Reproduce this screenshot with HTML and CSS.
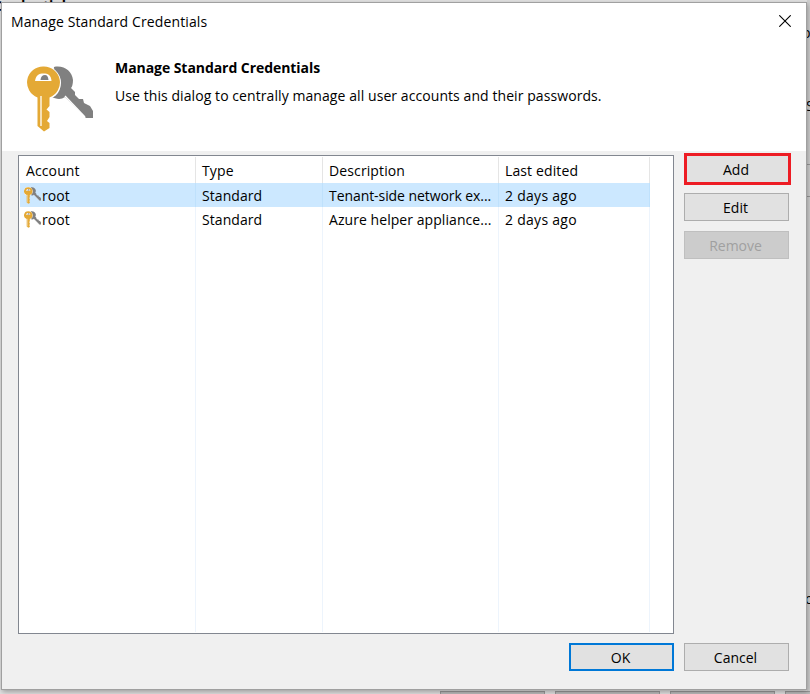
FILE: index.html
```html
<!DOCTYPE html>
<html lang="en">
<head>
<meta charset="utf-8">
<title>Manage Standard Credentials</title>
<link rel="stylesheet" href="styles.css">
</head>
<body>
<svg class="defs" width="0" height="0" aria-hidden="true">
  <symbol id="keys" viewBox="0 0 66 66">
    <path fill="#808080" d="M27 1C37-1 45 5 46 14C46 18 45 21 44 22L48 26V29L52 33H56L57 37L63 40L66 45V52H59L38 31C34 34 29 33 24 31Z"/>
    <path stroke="#fff" stroke-width="1.4" fill="none" d="M38 30L58 51"/>
    <circle cx="16.500" cy="17" r="17.500" fill="#fff"/>
    <path fill="#e4a935" d="M16.500 .5A16 16 0 0 1 22.500 31.500V40L19.500 43.500L22.500 46V51L20 55L22.500 57V62L17 65.500L10.500 60V31.500A16 16 0 0 1 16.500 .5Z"/>
    <path fill="#fff" d="M8 15C9 9 12 7.500 16.500 7.500S24 9 24.500 15Z"/>
    <path fill="#808080" d="M13.500 14Q14 9 18 9Q21 9 21.500 14Z"/>
    <path stroke="#fff" stroke-width="1.300" d="M14 30V60"/>
  </symbol>
</svg>
<div class="backdrop" aria-hidden="true">
  <span class="bg-title">Credentials</span>
  <div class="bg-right"><span class="frag frag-p">p</span><span class="frag frag-s">S</span><span class="frag frag-o">o</span><i class="bg-field"></i></div>
  <div class="bg-buttons"><i></i><i></i><i></i><i></i></div>
</div>
<main class="dialog">
  <header class="top">
    <div class="titlebar">
      <span class="w-title">Manage Standard Credentials</span>
      <svg class="close" width="12" height="12" viewBox="0 0 12 12"><path d="M.3.300L11.700 11.700M11.700.300L.300 11.700"/></svg>
    </div>
    <div class="intro">
      <svg class="keys-large"><use href="#keys"/></svg>
      <div>
        <h1>Manage Standard Credentials</h1>
        <p>Use this dialog to centrally manage all user accounts and their passwords.</p>
      </div>
    </div>
  </header>
  <section class="content">
    <div class="list">
      <div class="row head"><span>Account</span><span>Type</span><span>Description</span><span>Last edited</span></div>
      <div class="row selected"><span><svg class="keys-small"><use href="#keys"/></svg>root</span><span>Standard</span><span class="tight">Tenant-side network ex...</span><span class="wide">2 days ago</span></div>
      <div class="row"><span><svg class="keys-small"><use href="#keys"/></svg>root</span><span>Standard</span><span>Azure helper appliance...</span><span class="wide">2 days ago</span></div>
      <div class="row filler"><span></span><span></span><span></span><span></span></div>
    </div>
    <div class="actions">
      <button class="add">Add</button>
      <button>Edit</button>
      <button disabled>Remove</button>
    </div>
  </section>
  <footer>
    <button class="ok">OK</button>
    <button>Cancel</button>
  </footer>
</main>
</body>
</html>
```
FILE: styles.css
```css
* { box-sizing: border-box; }
body {
  margin: 0; width: 810px; height: 694px; overflow: hidden; position: relative;
  background: #e1e1e1; color: #000;
  font: 14px/20px "Open Sans", "Noto Sans", sans-serif;
}
.defs { position: absolute; }
.dialog {
  position: relative; display: flex; flex-direction: column;
  width: 806px; height: 688px; margin: 2px 0 0 1px;
  border: 1px solid #a0a0a0; background: #f0f0f0;
  box-shadow: 1px 2px 5px rgba(0,0,0,.3);
}
.top { height: 148px; background: #fff; }
.titlebar { display: flex; justify-content: space-between; padding: 9px 15px 0 9px; height: 52px; }
.w-title { letter-spacing: .12px; }
.close { margin-top: 3px; stroke: #000; stroke-width: 1.1; }
.intro { display: flex; padding-left: 25px; }
.keys-large { width: 66px; height: 66px; margin: 11px 22px 0 0; }
h1 { margin: 3px 0 8px; font-size: 14px; line-height: 20px; letter-spacing: -.06px; }
p { margin: 0; letter-spacing: .075px; }
.content { display: flex; padding: 4px 0 0 16px; height: 483px; }
.list { display: flex; flex-direction: column; width: 656px; height: 479px; padding: 1px; border: 1px solid #828790; background: #fff; }
.row { display: grid; grid-template-columns: 176px 127px 176px 151px; width: 630px; height: 24px; line-height: 26px; letter-spacing: .06px; }
.row span { height: 100%; border-right: 1px solid #edf4fc; padding-left: 6px; white-space: nowrap; }
.row.head { height: 26px; line-height: 27px; letter-spacing: .12px; }
.head span { border-color: #e5e5e5; }
.selected { background: #cce8ff; }
.selected span { border-color: #bfe1fc; }
.row .tight { letter-spacing: -.07px; }
.row .wide { letter-spacing: .28px; }
.filler { flex: 1; }
.keys-small { width: 17px; height: 17px; margin: 0 1px 0 -2px; vertical-align: -3px; }
.actions { margin: -2px 0 0 10px; display: flex; flex-direction: column; }
button {
  width: 105px; height: 28px; margin: 0 0 10px; padding: 2px 2px 0 0;
  border: 1px solid #adadad; background: #e1e1e1; color: #000; font: inherit;
}
button.add { width: 107px; height: 32px; border: 3px solid #ed1c24; margin-bottom: 8px; padding-right: 3px; }
button:disabled { background: #ccc; border-color: #bfbfbf; color: #a0a0a0; }
button.ok { border: 2px solid #0078d7; }
footer { display: flex; gap: 10px; padding: 9px 0 0 567px; }
.backdrop { position: absolute; inset: 0; overflow: hidden; }
.bg-title { position: absolute; left: -7px; top: -2px; font-weight: 700; line-height: 16px; }
.bg-right { position: absolute; left: 807px; top: 0; width: 3px; height: 694px; overflow: hidden; background: #d0d0d0; }
.bg-field { position: absolute; left: 0; top: 164px; width: 3px; height: 33px; border: solid #999; border-width: 1px 0; }
.frag { position: absolute; left: -5px; }
.frag-p { top: 23px; }
.frag-s { top: 96px; left: -1px; }
.frag-o { top: 589px; left: -2px; }
.bg-buttons { position: absolute; left: 440px; top: 691px; display: flex; gap: 10px; }
.bg-buttons i { width: 105px; height: 28px; border: 1px solid #999; background: #bbb; flex: none; }
```
